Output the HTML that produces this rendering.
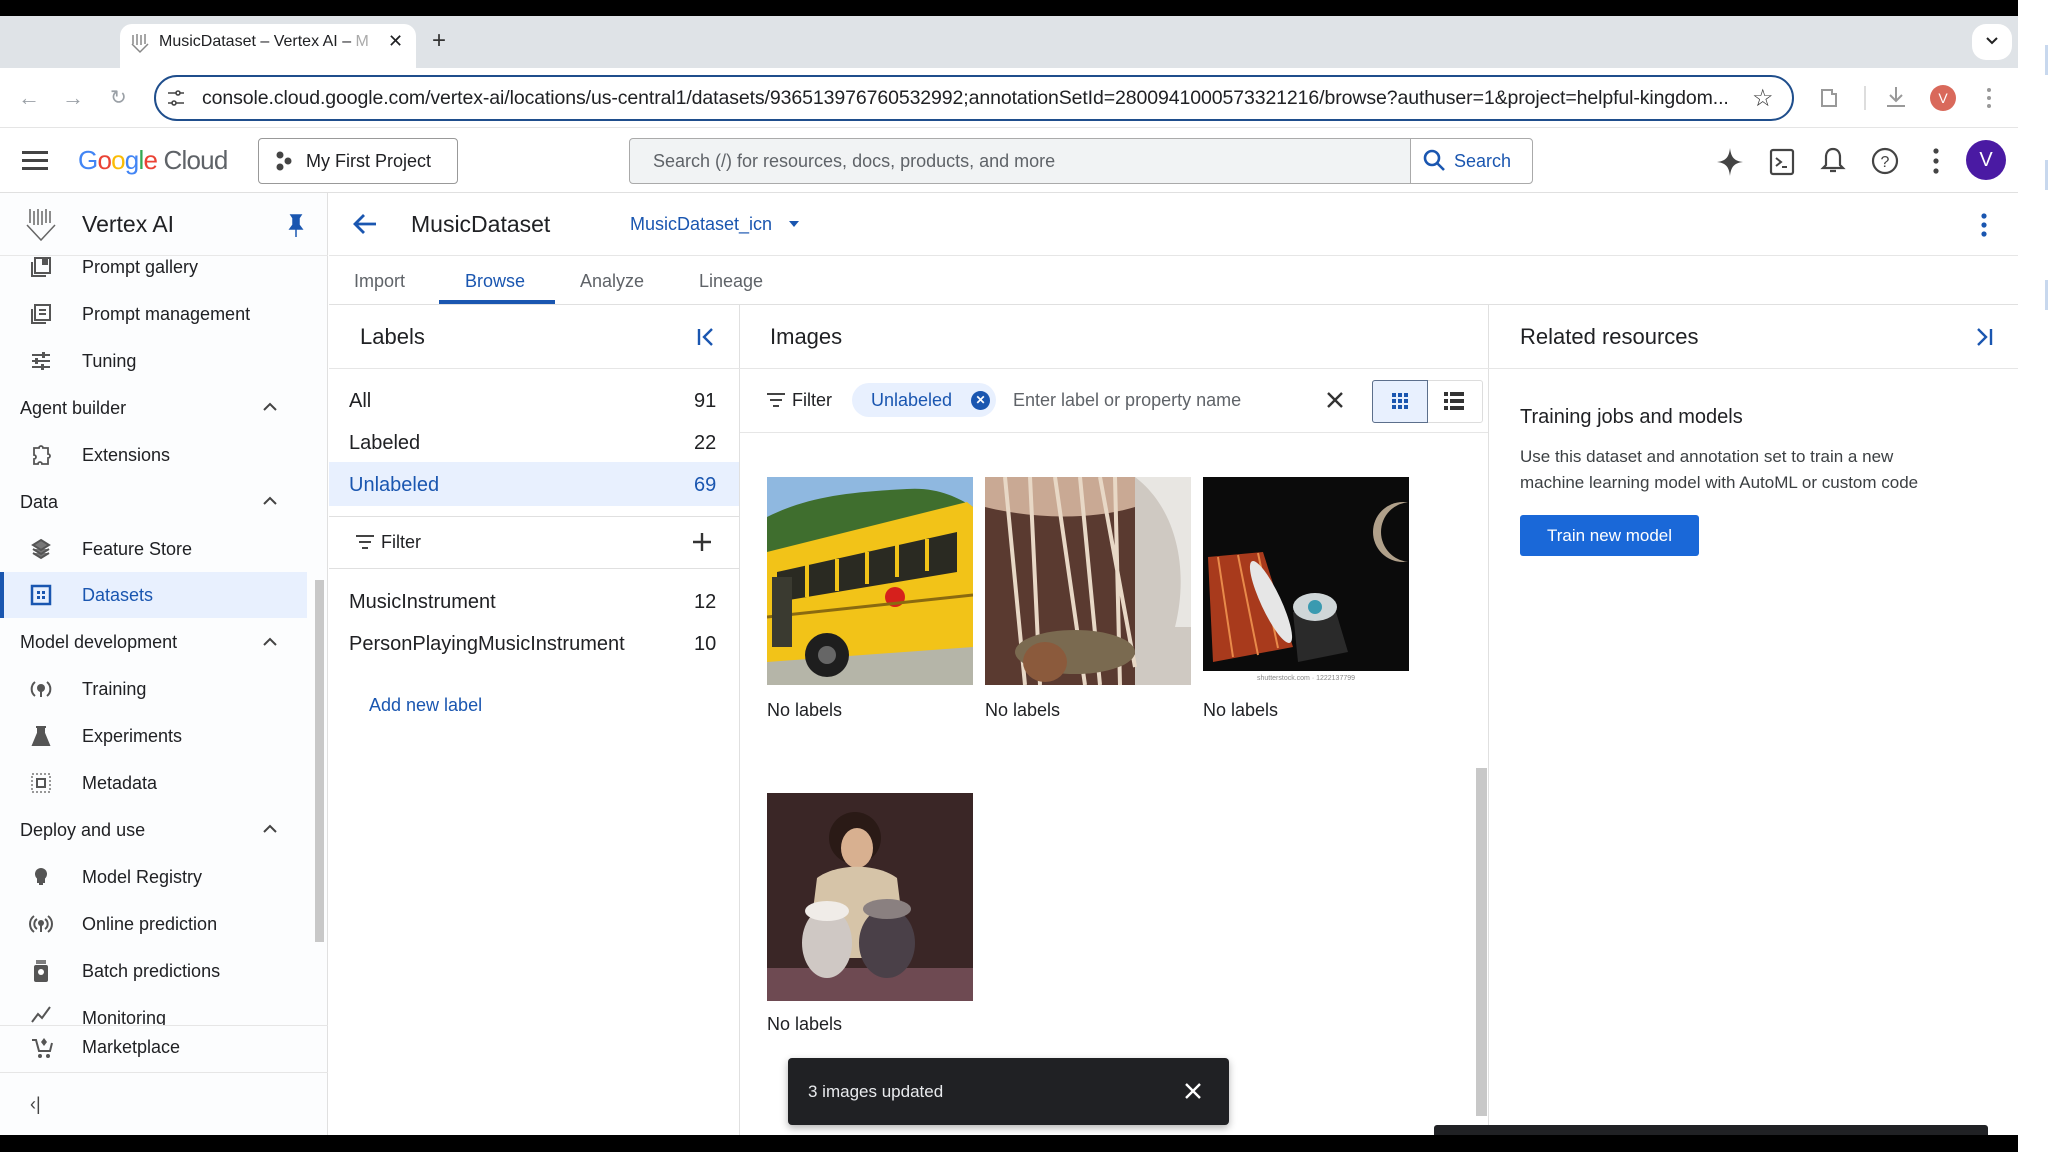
<!DOCTYPE html>
<html><head><meta charset="utf-8">
<style>
*{box-sizing:border-box;margin:0;padding:0}
body{width:2048px;height:1152px;position:relative;overflow:hidden;background:#fff;font-family:"Liberation Sans",Arial,sans-serif;color:#202124}
.a{position:absolute}
.t{position:absolute;white-space:nowrap}
.nav{font-size:18px;color:#202124}
.sec{font-size:18px;color:#202124}
</style></head><body>
<div class="a" style="left:0;top:0;width:2018px;height:16px;background:#000"></div>
<div class="a" style="left:0;top:1135px;width:2018px;height:17px;background:#000"></div>
<div class="a" style="left:0;top:16px;width:2018px;height:52px;background:#dfe3e7"></div>
<div class="a" style="left:120px;top:24px;width:296px;height:44px;background:#fff;border-radius:12px 12px 0 0"></div>
<svg class="a" style="left:130px;top:32px" width="20" height="22" viewBox="0 0 20 22"><g stroke="#888" stroke-width="1.5" fill="none"><path d="M3 3v9M7 2v11M11 3v10M15 2v10M2 12l8 8 8-8"/></g></svg>
<div class="t" style="left:159px;top:33px;font-size:16px;color:#202124">MusicDataset – Vertex AI – <span style="color:#aaa">M</span></div>
<div class="t" style="left:388px;top:31px;font-size:18px">✕</div>
<div class="t" style="left:432px;top:27px;font-size:24px;color:#333">+</div>
<div class="a" style="left:1972px;top:24px;width:40px;height:36px;background:#fff;border-radius:14px"></div>
<svg class="a" style="left:1984px;top:34px" width="16" height="14"><path d="M3 4l5 5 5-5" stroke="#222" stroke-width="2" fill="none"/></svg>
<div class="a" style="left:0;top:68px;width:2018px;height:60px;background:#fff;border-bottom:1px solid #e5e5e5"></div>
<div class="t" style="left:18px;top:85px;font-size:22px;color:#9aa0a6">←</div>
<div class="t" style="left:62px;top:85px;font-size:22px;color:#9aa0a6">→</div>
<div class="t" style="left:110px;top:85px;font-size:20px;color:#9aa0a6">↻</div>
<div class="a" style="left:154px;top:75px;width:1640px;height:46px;border:2px solid #1f4e8c;border-radius:23px"></div>
<svg class="a" style="left:166px;top:88px" width="20" height="20"><g stroke="#444" stroke-width="1.6" fill="none"><path d="M2 5h8M14 5h4M2 15h4M10 15h8"/><circle cx="12" cy="5" r="2"/><circle cx="8" cy="15" r="2"/></g></svg>
<div class="t" style="left:202px;top:87px;font-size:19.5px;color:#202124;letter-spacing:-0.1px">console.cloud.google.com/vertex-ai/locations/us-central1/datasets/936513976760532992;annotationSetId=2800941000573321216/browse?authuser=1&amp;project=helpful-kingdom...</div>
<div class="t" style="left:1752px;top:84px;font-size:24px;color:#333">☆</div>
<svg class="a" style="left:1818px;top:86px" width="22" height="24"><path d="M4 4h10v4h4v12H4z" stroke="#999" stroke-width="2" fill="none"/></svg>
<div class="a" style="left:1864px;top:86px;width:2px;height:24px;background:#ddd"></div>
<svg class="a" style="left:1884px;top:84px" width="24" height="26"><g stroke="#999" stroke-width="2" fill="none"><path d="M12 3v14M6 11l6 6 6-6M3 22h18"/></g></svg>
<div class="a" style="left:1930px;top:85px;width:26px;height:26px;border-radius:50%;background:#d9695b;color:#fff;font-size:14px;text-align:center;line-height:26px">V</div>
<svg class="a" style="left:1985px;top:86px" width="8" height="24"><g fill="#999"><circle cx="4" cy="4" r="2"/><circle cx="4" cy="12" r="2"/><circle cx="4" cy="20" r="2"/></g></svg>
<div class="a" style="left:0;top:128px;width:2018px;height:65px;background:#fff;border-bottom:1px solid #e0e0e0"></div>
<svg class="a" style="left:22px;top:150px" width="28" height="22"><g fill="#444"><rect y="1" width="26" height="3"/><rect y="9" width="26" height="3"/><rect y="17" width="26" height="3"/></g></svg>
<div class="t" style="left:78px;top:145px;font-size:26px;letter-spacing:-0.8px"><span style="color:#4285f4">G</span><span style="color:#ea4335">o</span><span style="color:#fbbc05">o</span><span style="color:#4285f4">g</span><span style="color:#34a853">l</span><span style="color:#ea4335">e</span> <span style="color:#5f6368">Cloud</span></div>
<div class="a" style="left:258px;top:138px;width:200px;height:46px;border:1px solid #999;border-radius:4px"></div>
<svg class="a" style="left:274px;top:150px" width="20" height="22"><g fill="#444"><circle cx="6" cy="5" r="3.5"/><circle cx="14" cy="11" r="3.5"/><circle cx="6" cy="17" r="3.5"/></g></svg>
<div class="t" style="left:306px;top:151px;font-size:18px">My First Project</div>
<div class="a" style="left:629px;top:138px;width:904px;height:46px;border:1px solid #aaa;border-radius:4px;background:#f1f3f4"></div>
<div class="a" style="left:1410px;top:139px;width:122px;height:44px;background:#fff;border-left:1px solid #aaa;border-radius:0 4px 4px 0"></div>
<div class="t" style="left:653px;top:151px;font-size:18px;color:#5f6368">Search (/) for resources, docs, products, and more</div>
<svg class="a" style="left:1422px;top:148px" width="26" height="26"><g stroke="#1a56b0" stroke-width="2.6" fill="none"><circle cx="10" cy="10" r="7"/><path d="M15 15l7 7"/></g></svg>
<div class="t" style="left:1454px;top:151px;font-size:18px;color:#1a56b0">Search</div>
<svg class="a" style="left:1716px;top:147px" width="28" height="30"><path d="M14 1C15 10 18 14 27 15 18 16 15 20 14 29 13 20 10 16 1 15 10 14 13 10 14 1z" fill="#444"/></svg>
<svg class="a" style="left:1769px;top:148px" width="26" height="28"><rect x="2" y="2" width="22" height="24" rx="2" stroke="#444" stroke-width="2.2" fill="none"/><path d="M7 10l5 4-5 4M13 19h5" stroke="#444" stroke-width="2" fill="none"/></svg>
<svg class="a" style="left:1820px;top:146px" width="26" height="30"><path d="M13 3c-5 0-7 4-7 8v8l-3 3h20l-3-3v-8c0-4-2-8-7-8zM10 25h6" stroke="#444" stroke-width="2.2" fill="none"/></svg>
<svg class="a" style="left:1871px;top:147px" width="28" height="28"><circle cx="14" cy="14" r="12" stroke="#444" stroke-width="2.2" fill="none"/><text x="14" y="20" font-size="16" text-anchor="middle" fill="#444" font-family="Liberation Sans">?</text></svg>
<svg class="a" style="left:1930px;top:147px" width="12" height="28"><g fill="#444"><circle cx="6" cy="4" r="2.6"/><circle cx="6" cy="14" r="2.6"/><circle cx="6" cy="24" r="2.6"/></g></svg>
<div class="a" style="left:1966px;top:140px;width:40px;height:40px;border-radius:50%;background:#4a1aa3;color:#fff;font-size:20px;text-align:center;line-height:40px">V</div>
<div class="a" style="left:0;top:193px;width:328px;height:942px;background:#fcfdfe;border-right:1px solid #e0e0e0"></div>
<div class="a" style="left:0;top:255px;width:328px;height:1px;background:#e8e8e8"></div>
<svg class="a" style="left:24px;top:207px" width="34" height="36"><g stroke="#666" stroke-width="1.5" fill="none"><path d="M6 2v14M10 4v14M14 2v16M18 4v14M22 2v14M26 4v12M3 18l14 15 14-15"/></g></svg>
<div class="t" style="left:82px;top:211px;font-size:23px">Vertex AI</div>
<svg class="a" style="left:288px;top:214px" width="16" height="24"><path d="M3 1h10l-2 3v7l3 4H2l3-4V4z M8 15v8" fill="#1a56b0" stroke="#1a56b0" stroke-width="1.5"/></svg>
<div class="a" style="left:0;top:572px;width:307px;height:46px;background:#e8f0fe"></div>
<div class="a" style="left:0;top:572px;width:4px;height:46px;background:#1a56b0"></div>
<div class="a" style="left:315px;top:580px;width:9px;height:362px;background:#c8c8c8"></div>
<div class="t nav" style="left:82px;top:257px">Prompt gallery</div>
<div class="t nav" style="left:82px;top:304px">Prompt management</div>
<div class="t nav" style="left:82px;top:351px">Tuning</div>
<div class="t sec" style="left:20px;top:398px">Agent builder</div>
<div class="t nav" style="left:82px;top:445px">Extensions</div>
<div class="t sec" style="left:20px;top:492px">Data</div>
<div class="t nav" style="left:82px;top:539px">Feature Store</div>
<div class="t nav" style="left:82px;top:585px;color:#1a56b0">Datasets</div>
<div class="t sec" style="left:20px;top:632px">Model development</div>
<div class="t nav" style="left:82px;top:679px">Training</div>
<div class="t nav" style="left:82px;top:726px">Experiments</div>
<div class="t nav" style="left:82px;top:773px">Metadata</div>
<div class="t sec" style="left:20px;top:820px">Deploy and use</div>
<div class="t nav" style="left:82px;top:867px">Model Registry</div>
<div class="t nav" style="left:82px;top:914px">Online prediction</div>
<div class="t nav" style="left:82px;top:961px">Batch predictions</div>
<div class="a" style="left:0;top:1000px;width:310px;height:26px;overflow:hidden"><div class="t nav" style="left:82px;top:8px">Monitoring</div></div>
<div class="a" style="left:0;top:1025px;width:328px;height:1px;background:#e6e6e6"></div>
<div class="t nav" style="left:82px;top:1037px">Marketplace</div>
<div class="a" style="left:0;top:1072px;width:328px;height:1px;background:#e6e6e6"></div>
<div class="t" style="left:30px;top:1094px;font-size:18px;color:#444">‹|</div>
<svg class="a" style="left:262px;top:401px" width="16" height="12"><path d="M2 9l6-6 6 6" stroke="#444" stroke-width="2" fill="none"/></svg>
<svg class="a" style="left:262px;top:495px" width="16" height="12"><path d="M2 9l6-6 6 6" stroke="#444" stroke-width="2" fill="none"/></svg>
<svg class="a" style="left:262px;top:636px" width="16" height="12"><path d="M2 9l6-6 6 6" stroke="#444" stroke-width="2" fill="none"/></svg>
<svg class="a" style="left:262px;top:823px" width="16" height="12"><path d="M2 9l6-6 6 6" stroke="#444" stroke-width="2" fill="none"/></svg>
<svg class="a" style="left:30px;top:256px" width="22" height="22"><g stroke="#555" stroke-width="2" fill="none"><rect x="5" y="2" width="15" height="15"/><path d="M2 6v14h14"/></g><rect x="12" y="2" width="6" height="7" fill="#555"/></svg>
<svg class="a" style="left:30px;top:303px" width="22" height="22"><g stroke="#555" stroke-width="2" fill="none"><rect x="5" y="2" width="15" height="15"/><path d="M2 6v14h14M9 7h7M9 11h7"/></g></svg>
<svg class="a" style="left:30px;top:350px" width="22" height="22"><g stroke="#555" stroke-width="2"><path d="M2 5h18M2 11h18M2 17h18"/></g><g fill="#555"><rect x="12" y="2" width="3" height="6"/><rect x="5" y="8" width="3" height="6"/><rect x="11" y="14" width="3" height="6"/></g></svg>
<svg class="a" style="left:30px;top:444px" width="22" height="22"><path d="M4 4h5a2 2 0 014 0h5v6a2 2 0 010 4v6h-6a2 2 0 00-4 0H4v-5a2 2 0 000-4z" stroke="#555" stroke-width="1.8" fill="none"/></svg>
<svg class="a" style="left:30px;top:538px" width="22" height="22"><path d="M11 2l8 5-8 5-8-5z M3 11l8 5 8-5M3 15l8 5 8-5" stroke="#555" stroke-width="2" fill="#777"/></svg>
<svg class="a" style="left:30px;top:584px" width="22" height="22"><rect x="2" y="2" width="18" height="18" stroke="#1a56b0" stroke-width="2.5" fill="none"/><g fill="#1a56b0"><rect x="7" y="7" width="3" height="3"/><rect x="12" y="7" width="3" height="3"/><rect x="7" y="12" width="3" height="3"/><rect x="12" y="12" width="3" height="3"/></g></svg>
<svg class="a" style="left:30px;top:678px" width="22" height="22"><g stroke="#555" stroke-width="2" fill="none"><path d="M5 4a9 9 0 000 14M17 4a9 9 0 010 14"/></g><circle cx="11" cy="10" r="4" fill="#555"/><rect x="10" y="12" width="2" height="7" fill="#555"/></svg>
<svg class="a" style="left:30px;top:725px" width="22" height="22"><path d="M6 2h10M8 2v6L3 20h16L14 8V2" fill="#555" stroke="#555" stroke-width="2"/></svg>
<svg class="a" style="left:30px;top:772px" width="22" height="22"><rect x="2" y="2" width="18" height="18" stroke="#777" stroke-width="1.5" stroke-dasharray="2 2" fill="none"/><rect x="7" y="7" width="8" height="8" stroke="#555" stroke-width="2" fill="none"/></svg>
<svg class="a" style="left:30px;top:866px" width="22" height="22"><circle cx="11" cy="8" r="6" fill="#555"/><path d="M8 12h6v4H8zM9 18h4" stroke="#555" stroke-width="2" fill="#555"/></svg>
<svg class="a" style="left:28px;top:913px" width="26" height="22"><g stroke="#555" stroke-width="2" fill="none"><path d="M6 3a10 10 0 000 16M20 3a10 10 0 010 16M9 6a6 6 0 000 10M17 6a6 6 0 010 10"/></g><circle cx="13" cy="10" r="3" fill="#555"/><rect x="12" y="12" width="2" height="7" fill="#555"/></svg>
<svg class="a" style="left:31px;top:960px" width="20" height="24"><rect x="3" y="5" width="14" height="17" rx="2" fill="#555"/><path d="M5 1h10M5 3h10" stroke="#555" stroke-width="1.5"/><circle cx="10" cy="12" r="3" fill="#fff"/></svg>
<svg class="a" style="left:30px;top:1004px" width="22" height="20"><path d="M2 18l6-8 4 4 8-11" stroke="#555" stroke-width="2" fill="none"/></svg>
<svg class="a" style="left:30px;top:1036px" width="24" height="24"><g stroke="#555" stroke-width="2" fill="none"><path d="M2 4h4l3 11h11l2-8"/></g><circle cx="10" cy="20" r="2" fill="#555"/><circle cx="18" cy="20" r="2" fill="#555"/><path d="M14 2l3 4-3 4-3-4z" fill="#555"/></svg>
<div class="a" style="left:329px;top:255px;width:1689px;height:1px;background:#e6e6e6"></div>
<svg class="a" style="left:352px;top:212px" width="26" height="24"><path d="M24 12H4M12 3l-9 9 9 9" stroke="#1a56b0" stroke-width="2.8" fill="none"/></svg>
<div class="t" style="left:411px;top:211px;font-size:23px">MusicDataset</div>
<div class="t" style="left:630px;top:214px;font-size:18px;color:#1a56b0">MusicDataset_icn</div>
<svg class="a" style="left:788px;top:219px" width="12" height="10"><path d="M1 2h10L6 8z" fill="#1a56b0"/></svg>
<svg class="a" style="left:1978px;top:212px" width="12" height="26"><g fill="#1a56b0"><circle cx="6" cy="4" r="2.6"/><circle cx="6" cy="13" r="2.6"/><circle cx="6" cy="22" r="2.6"/></g></svg>
<div class="t" style="left:354px;top:271px;font-size:18px;color:#5f6368">Import</div>
<div class="t" style="left:465px;top:271px;font-size:18px;color:#1a56b0">Browse</div>
<div class="t" style="left:580px;top:271px;font-size:18px;color:#5f6368">Analyze</div>
<div class="t" style="left:699px;top:271px;font-size:18px;color:#5f6368">Lineage</div>
<div class="a" style="left:439px;top:300px;width:116px;height:4px;background:#1a56b0"></div>
<div class="a" style="left:329px;top:304px;width:1689px;height:1px;background:#e0e0e0"></div>
<div class="a" style="left:739px;top:305px;width:1px;height:830px;background:#e0e0e0"></div>
<div class="a" style="left:1488px;top:305px;width:1px;height:830px;background:#e0e0e0"></div>
<div class="a" style="left:329px;top:368px;width:1689px;height:1px;background:#e6e6e6"></div>
<div class="t" style="left:360px;top:324px;font-size:22px">Labels</div>
<svg class="a" style="left:696px;top:326px" width="20" height="22"><path d="M3 3v16M16 3l-8 8 8 8" stroke="#1a56b0" stroke-width="2.4" fill="none"/></svg>
<div class="a" style="left:329px;top:462px;width:410px;height:44px;background:#e8f0fe"></div>
<div class="t" style="left:349px;top:390px;font-size:20px">All</div><div class="t" style="left:694px;top:390px;font-size:20px">91</div>
<div class="t" style="left:349px;top:432px;font-size:20px">Labeled</div><div class="t" style="left:694px;top:432px;font-size:20px">22</div>
<div class="t" style="left:349px;top:474px;font-size:20px;color:#1a56b0">Unlabeled</div><div class="t" style="left:694px;top:474px;font-size:20px;color:#1a56b0">69</div>
<div class="a" style="left:329px;top:516px;width:410px;height:1px;background:#e0e0e0"></div>
<svg class="a" style="left:355px;top:534px" width="20" height="16"><path d="M1 2h18M4 8h12M7 14h6" stroke="#444" stroke-width="2"/></svg>
<div class="t" style="left:381px;top:532px;font-size:18px">Filter</div>
<svg class="a" style="left:692px;top:532px" width="20" height="20"><path d="M10 1v18M1 10h18" stroke="#333" stroke-width="2.4"/></svg>
<div class="a" style="left:329px;top:568px;width:410px;height:1px;background:#e0e0e0"></div>
<div class="t" style="left:349px;top:591px;font-size:20px">MusicInstrument</div><div class="t" style="left:694px;top:591px;font-size:20px">12</div>
<div class="t" style="left:349px;top:633px;font-size:20px">PersonPlayingMusicInstrument</div><div class="t" style="left:694px;top:633px;font-size:20px">10</div>
<div class="t" style="left:369px;top:695px;font-size:18px;color:#1a56b0">Add new label</div>
<div class="t" style="left:770px;top:324px;font-size:22px">Images</div>
<svg class="a" style="left:766px;top:392px" width="20" height="16"><path d="M1 2h18M4 8h12M7 14h6" stroke="#444" stroke-width="2"/></svg>
<div class="t" style="left:792px;top:390px;font-size:18px">Filter</div>
<div class="a" style="left:852px;top:383px;width:144px;height:34px;border-radius:17px;background:#e8f0fe"></div>
<div class="t" style="left:871px;top:390px;font-size:18px;color:#1a56b0">Unlabeled</div>
<div class="a" style="left:971px;top:391px;width:19px;height:19px;border-radius:50%;background:#1a56b0;color:#fff;font-size:12px;text-align:center;line-height:19px;font-weight:bold">✕</div>
<div class="t" style="left:1013px;top:390px;font-size:18px;color:#5f6368">Enter label or property name</div>
<svg class="a" style="left:1325px;top:390px" width="20" height="20"><path d="M3 3l14 14M17 3L3 17" stroke="#333" stroke-width="2.4"/></svg>
<div class="a" style="left:1372px;top:380px;width:111px;height:43px;border:1px solid #ddd;border-radius:3px"></div>
<div class="a" style="left:1372px;top:380px;width:56px;height:43px;border:1.5px solid #5c6f8c;border-radius:3px 0 0 3px;background:#e8f0fe"></div>
<svg class="a" style="left:1391px;top:392px" width="18" height="18"><g fill="#1a56b0"><rect x="1" y="1" width="4" height="4"/><rect x="7" y="1" width="4" height="4"/><rect x="13" y="1" width="4" height="4"/><rect x="1" y="7" width="4" height="4"/><rect x="7" y="7" width="4" height="4"/><rect x="13" y="7" width="4" height="4"/><rect x="1" y="13" width="4" height="4"/><rect x="7" y="13" width="4" height="4"/><rect x="13" y="13" width="4" height="4"/></g></svg>
<svg class="a" style="left:1444px;top:391px" width="20" height="20"><g fill="#333"><rect x="0" y="1" width="4" height="4"/><rect x="6" y="1" width="14" height="4"/><rect x="0" y="8" width="4" height="4"/><rect x="6" y="8" width="14" height="4"/><rect x="0" y="15" width="4" height="4"/><rect x="6" y="15" width="14" height="4"/></g></svg>
<div class="a" style="left:740px;top:432px;width:748px;height:1px;background:#e6e6e6"></div>
<svg class="a" style="left:767px;top:477px" width="206" height="208" viewBox="0 0 206 208">
<rect width="206" height="208" fill="#8fb8e0"/>
<path d="M0 40C40 20 80 15 140 12 170 10 190 20 206 30V90H0z" fill="#3f6e2e"/>
<rect y="160" width="206" height="48" fill="#b5b5a8"/>
<path d="M0 75L200 25 206 30 206 170 0 185z" fill="#f2c318"/>
<path d="M10 95L190 55V95L10 125z" fill="#2a2a22"/>
<g stroke="#f2c318" stroke-width="4"><path d="M40 88v32M70 82v32M100 75v32M130 68v32M160 62v32"/></g>
<circle cx="128" cy="120" r="10" fill="#d6201c"/>
<path d="M0 140L206 118" stroke="#8a6a10" stroke-width="3"/>
<circle cx="60" cy="178" r="22" fill="#1e1e1e"/><circle cx="60" cy="178" r="9" fill="#666"/>
<rect x="5" y="100" width="20" height="70" fill="#3a3a30"/>
</svg>
<svg class="a" style="left:985px;top:477px" width="206" height="208" viewBox="0 0 206 208">
<rect width="206" height="208" fill="#cfc9c2"/>
<rect x="0" y="0" width="150" height="208" fill="#5a3a30"/>
<path d="M0 0h150v30C100 45 40 40 0 30z" fill="#c9a994"/>
<path d="M150 0c40 30 55 90 40 150l16 0V0z" fill="#e8e6e2"/>
<g stroke="#e8d8c6" stroke-width="4" fill="none"><path d="M20 0l20 208M45 0l10 208M70 0l30 208M95 0l20 208M115 0l35 190M130 0l5 208"/></g>
<ellipse cx="90" cy="175" rx="60" ry="22" fill="#7a6a50"/>
<ellipse cx="60" cy="185" rx="22" ry="20" fill="#8b5a3c"/>
</svg>
<svg class="a" style="left:1203px;top:477px" width="206" height="208" viewBox="0 0 206 208">
<rect width="206" height="208" fill="#fff"/>
<rect width="206" height="194" fill="#0b0b0b"/>
<circle cx="200" cy="55" r="30" fill="#b0a08a"/><circle cx="208" cy="55" r="30" fill="#0b0b0b"/>
<path d="M5 80L60 75 90 170 10 185z" fill="#a83a1c"/>
<g stroke="#e88a4a" stroke-width="2"><path d="M15 80l15 100M35 78l20 100M55 76l20 95"/></g>
<ellipse cx="68" cy="125" rx="10" ry="45" fill="#e6e6e6" transform="rotate(-25 68 125)"/>
<path d="M90 135l40-10 15 50-50 10z" fill="#2a2a2a"/>
<ellipse cx="112" cy="130" rx="22" ry="14" fill="#cfd6d8"/><circle cx="112" cy="130" r="7" fill="#3a9ab0"/>
<text x="103" y="203" font-size="7" text-anchor="middle" fill="#888" font-family="Liberation Sans">shutterstock.com · 1222137799</text>
</svg>
<div class="t" style="left:767px;top:700px;font-size:18px">No labels</div>
<div class="t" style="left:985px;top:700px;font-size:18px">No labels</div>
<div class="t" style="left:1203px;top:700px;font-size:18px">No labels</div>
<svg class="a" style="left:767px;top:793px" width="206" height="208" viewBox="0 0 206 208">
<rect width="206" height="208" fill="#3a2626"/>
<rect y="175" width="206" height="33" fill="#6e4a52"/>
<circle cx="88" cy="45" r="26" fill="#2a1a16"/><ellipse cx="90" cy="55" rx="16" ry="20" fill="#d8b090"/>
<path d="M50 85c20-15 60-15 80 0l10 80H40z" fill="#d6c4a8"/>
<ellipse cx="60" cy="150" rx="25" ry="35" fill="#cfc8c4"/><ellipse cx="60" cy="118" rx="22" ry="10" fill="#f0ece8"/>
<ellipse cx="120" cy="150" rx="28" ry="35" fill="#4a4048"/><ellipse cx="120" cy="116" rx="24" ry="10" fill="#8a8080"/>
</svg>
<div class="t" style="left:767px;top:1014px;font-size:18px">No labels</div>
<div class="a" style="left:1476px;top:768px;width:11px;height:348px;background:#c8c8c8"></div>
<div class="a" style="left:788px;top:1058px;width:441px;height:67px;background:#202124;border-radius:4px;box-shadow:0 3px 8px rgba(0,0,0,.3)"></div>
<div class="t" style="left:808px;top:1082px;font-size:17px;color:#e8eaed">3 images updated</div>
<svg class="a" style="left:1184px;top:1082px" width="18" height="18"><path d="M2 2l14 14M16 2L2 16" stroke="#fff" stroke-width="2.4"/></svg>
<div class="a" style="left:1434px;top:1125px;width:554px;height:10px;background:#202124;border-radius:3px 3px 0 0"></div>
<div class="t" style="left:1520px;top:324px;font-size:22px">Related resources</div>
<svg class="a" style="left:1974px;top:326px" width="20" height="22"><path d="M17 3v16M4 3l8 8-8 8" stroke="#1a56b0" stroke-width="2.4" fill="none"/></svg>
<div class="t" style="left:1520px;top:406px;font-size:20px">Training jobs and models</div>
<div class="t" style="left:1520px;top:444px;font-size:17px;color:#3c4043;line-height:26px">Use this dataset and annotation set to train a new<br>machine learning model with AutoML or custom code</div>
<div class="a" style="left:1520px;top:515px;width:179px;height:41px;background:#1a68d8;border-radius:3px;color:#fff;font-size:17px;text-align:center;line-height:41px">Train new model</div>
<div class="a" style="left:2018px;top:0;width:30px;height:1152px;background:#fff"></div>
<div class="a" style="left:2045px;top:45px;width:3px;height:30px;background:#c8d8ee"></div>
<div class="a" style="left:2045px;top:160px;width:3px;height:30px;background:#c8d8ee"></div>
<div class="a" style="left:2045px;top:280px;width:3px;height:30px;background:#c8d8ee"></div>
</body></html>
